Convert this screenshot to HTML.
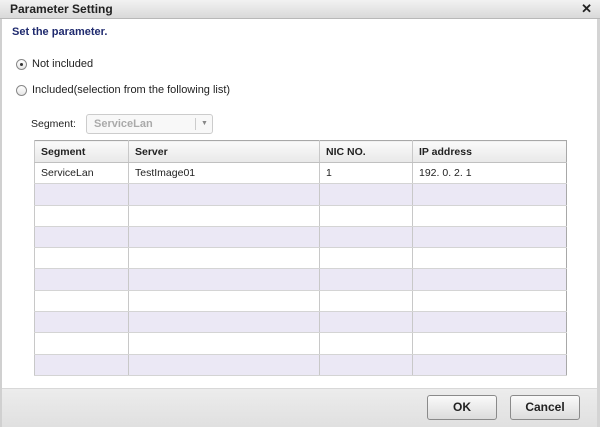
<!DOCTYPE html>
<html><head><style>
*{margin:0;padding:0;box-sizing:border-box}
body{width:600px;height:427px;overflow:hidden;background:#fff;font-family:"Liberation Sans",Arial,sans-serif;font-size:11px;color:#222;position:relative}
.abs{position:absolute}
#title{left:0;top:0;width:600px;height:19px;background:linear-gradient(#f2f2f2,#d9d9d9);border-bottom:1px solid #b8b8b8;font-weight:bold;font-size:12px;color:#222;padding:2px 0 0 10px}
#x{right:8px;top:1px;font-size:13px;font-weight:bold}
#lb{left:0;top:19px;width:2px;height:408px;background:#d0d0d0}
#rb{right:0;top:19px;width:3px;height:408px;background:#d4d4d4}
.radio{width:11px;height:11px;border:1px solid #888;border-radius:50%;background:linear-gradient(#fff,#e6e6e6)}
table{position:absolute;left:34px;top:140px;width:533px;border-collapse:collapse;border:1px solid #a8a8a8}
td,th{border-left:1px solid #c8c8c8;border-bottom:1px solid #d4d4d4;height:21.3px;padding:0 0 0 6px;text-align:left;font-size:10.5px;font-weight:normal}
th{font-weight:bold;height:22px;background:linear-gradient(#fafafa,#e8e8e8);border-bottom:1px solid #c0c0c0}
tr.a td{background:#ebe8f5}
#foot{left:2px;top:388px;width:595px;height:39px;background:linear-gradient(#ececec,#e0e0e0);border-top:1px solid #d8d8d8}
.btn{height:25px;width:70px;border:1px solid #8a8a8a;border-radius:3px;background:linear-gradient(#fafafa,#dcdcdc);font-weight:bold;font-size:12px;text-align:center;line-height:23px}
</style></head><body>
<div id="title" class="abs">Parameter Setting</div>
<div id="x" class="abs">✕</div>
<div id="lb" class="abs"></div><div id="rb" class="abs"></div>
<div class="abs" style="left:12px;top:26px;font-weight:bold;color:#1f2a6e;font-size:11px">Set the parameter.</div>
<div class="abs radio" style="left:16px;top:59px"><div style="width:3px;height:3px;background:#333;border-radius:50%;margin:3px 0 0 3px"></div></div>
<div class="abs" style="left:32px;top:58px;font-size:11px">Not included</div>
<div class="abs radio" style="left:16px;top:85px"></div>
<div class="abs" style="left:32px;top:84px;font-size:11px">Included(selection from the following list)</div>
<div class="abs" style="left:31px;top:118px;font-size:10.5px">Segment:</div>
<div class="abs" style="left:86px;top:114px;width:127px;height:20px;border:1px solid #ccc;border-radius:3px;background:#f8f8f8;color:#aaa;font-weight:bold;padding:3px 0 0 7px">ServiceLan<span style="position:absolute;left:108px;top:3px;height:12px;border-left:1px solid #ccc"></span><span style="position:absolute;left:114px;top:5px;font-size:7px;color:#888">▼</span></div>
<table>
<tr><th style="width:94px">Segment</th><th style="width:191px">Server</th><th style="width:93px">NIC NO.</th><th>IP address</th></tr>
<tr><td>ServiceLan</td><td>TestImage01</td><td>1</td><td>192. 0. 2. 1</td></tr>
<tr class="a"><td></td><td></td><td></td><td></td></tr>
<tr><td></td><td></td><td></td><td></td></tr>
<tr class="a"><td></td><td></td><td></td><td></td></tr>
<tr><td></td><td></td><td></td><td></td></tr>
<tr class="a"><td></td><td></td><td></td><td></td></tr>
<tr><td></td><td></td><td></td><td></td></tr>
<tr class="a"><td></td><td></td><td></td><td></td></tr>
<tr><td></td><td></td><td></td><td></td></tr>
<tr class="a"><td></td><td></td><td></td><td></td></tr>
</table>
<div id="foot" class="abs"></div>
<div class="abs btn" style="left:427px;top:395px">OK</div>
<div class="abs btn" style="left:510px;top:395px">Cancel</div>
</body></html>
